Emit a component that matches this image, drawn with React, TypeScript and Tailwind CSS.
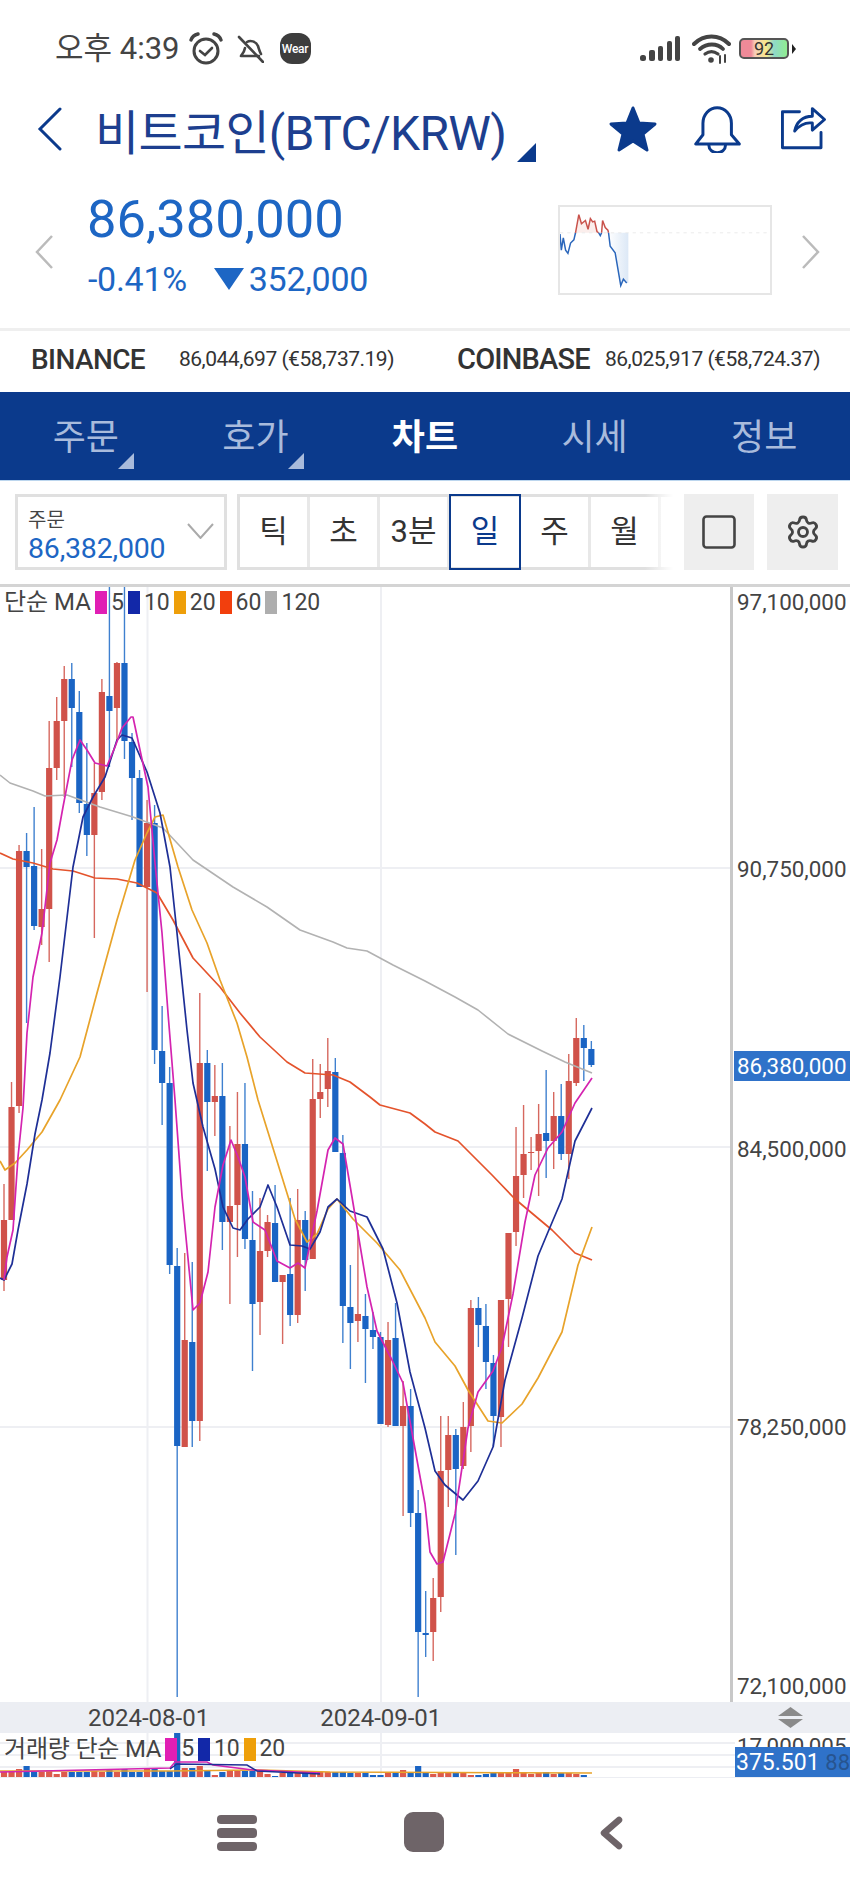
import { Settings } from "lucide-react";

const NAVY = "#0b3a8c";
const BLUE = "#1d66c4";
const RED_BODY = "#d0524a";
const BLUE_BODY = "#1a64c4";

// [rising, bodyTop, bodyBottom, wickTop, wickBottom] in page pixels, one per day
const candles: [number, number, number, number, number][] = [
	[1, 1220, 1280, 1184, 1291], [1, 1107, 1220, 1082, 1220], [1, 851, 1106, 845, 1113], [0, 851, 867, 833, 1023],
	[0, 866, 926, 807, 930], [1, 909, 927, 849, 945], [1, 768, 909, 721, 962], [1, 721, 768, 697, 780],
	[1, 679, 721, 666, 797], [0, 679, 708, 663, 767], [0, 712, 803, 691, 813], [0, 804, 835, 743, 856],
	[1, 793, 835, 763, 938], [1, 692, 792, 679, 800], [0, 696, 711, 586, 767], [1, 663, 708, 662, 740],
	[0, 663, 741, 586, 759], [0, 742, 778, 733, 820], [0, 778, 887, 770, 887], [1, 823, 887, 800, 992],
	[0, 823, 1050, 805, 1064], [0, 1051, 1083, 1006, 1125], [0, 1083, 1265, 1067, 1274], [0, 1266, 1446, 1248, 1697],
	[1, 1340, 1447, 1253, 1447], [0, 1342, 1421, 1262, 1447], [1, 1063, 1421, 993, 1441], [0, 1063, 1102, 1050, 1171],
	[1, 1096, 1102, 1065, 1136], [0, 1096, 1222, 1063, 1250], [1, 1206, 1222, 1126, 1304], [1, 1144, 1205, 1092, 1257],
	[0, 1144, 1239, 1083, 1249], [0, 1240, 1304, 1191, 1371], [1, 1251, 1302, 1198, 1335], [1, 1222, 1251, 1215, 1257],
	[0, 1223, 1282, 1185, 1282], [1, 1275, 1282, 1275, 1344], [0, 1274, 1315, 1198, 1326], [1, 1220, 1315, 1189, 1323],
	[0, 1220, 1260, 1211, 1291], [1, 1099, 1259, 1059, 1259], [1, 1092, 1099, 1064, 1118], [1, 1071, 1089, 1038, 1107],
	[0, 1072, 1152, 1058, 1152], [0, 1153, 1306, 1135, 1343], [0, 1307, 1323, 1265, 1369], [1, 1314, 1321, 1230, 1342],
	[0, 1316, 1329, 1294, 1383], [0, 1330, 1337, 1312, 1349], [0, 1337, 1424, 1332, 1424], [1, 1340, 1425, 1322, 1427],
	[0, 1338, 1426, 1303, 1426], [1, 1406, 1426, 1381, 1516], [0, 1406, 1513, 1389, 1527], [0, 1513, 1632, 1490, 1697],
	[0, 1633, 1635, 1591, 1657], [1, 1598, 1632, 1578, 1661], [1, 1471, 1597, 1416, 1612], [1, 1435, 1470, 1416, 1507],
	[0, 1435, 1469, 1429, 1555], [1, 1427, 1466, 1402, 1469], [1, 1308, 1426, 1300, 1452], [0, 1308, 1325, 1297, 1347],
	[0, 1326, 1362, 1304, 1389], [0, 1363, 1416, 1355, 1447], [1, 1300, 1417, 1300, 1447], [1, 1233, 1299, 1244, 1347],
	[1, 1176, 1232, 1127, 1246], [1, 1154, 1175, 1105, 1198], [1, 1152, 1153, 1137, 1170], [1, 1134, 1151, 1104, 1196],
	[0, 1133, 1141, 1070, 1178], [1, 1116, 1141, 1092, 1169], [0, 1116, 1154, 1084, 1160], [1, 1081, 1154, 1054, 1179],
	[1, 1038, 1083, 1018, 1086], [0, 1038, 1048, 1025, 1081], [0, 1049, 1065, 1041, 1067],
];

const volumes = [
	6, 6, 9, 12, 6, 6, 8, 4, 6, 6, 6, 6, 7, 6, 9, 6, 9, 6, 6, 10, 9, 7, 7, 45, 10, 10, 12, 8, 3, 6, 8, 7, 7, 7, 7, 4, 2, 5, 5, 5, 5, 6,
	6, 6, 6, 6, 5, 5, 5, 3, 3, 5, 5, 8, 6, 12, 6, 4, 5, 5, 5, 5, 3, 3, 4, 5, 5, 5, 9, 6, 4, 5, 6, 4, 5, 5, 4, 3, 1,
];

const ma5 = "4,1280 7,1257 13,1230 18,1157 23,1108 27,1033 33,977 42,933 50,863 57,840 63,807 72,760 80,740 87,750 95,763 107,766 115,747 122,728 131,717 133,717 140,750 148,787 155,863 162,933 168,1013 175,1100 182,1196 193,1310 200,1303 208,1272 215,1207 223,1165 231,1140 238,1157 245,1177 253,1222 265,1230 277,1261 290,1268 298,1263 305,1268 317,1211 328,1150 335,1138 343,1144 353,1203 367,1287 377,1331 392,1360 403,1383 417,1460 425,1504 430,1552 437,1564 443,1562 455,1514 468,1428 478,1392 493,1371 502,1347 513,1294 525,1222 535,1175 548,1148 562,1132 575,1103 592,1078";
const ma10 = "0,1278 4,1280 12,1264 18,1230 27,1184 35,1134 42,1100 50,1053 60,977 73,867 83,817 93,797 105,777 117,740 122,735 132,738 147,772 160,813 170,867 177,933 187,1030 193,1083 203,1127 215,1169 223,1207 233,1228 240,1230 248,1219 260,1207 268,1185 277,1207 290,1245 302,1246 310,1249 320,1232 328,1207 337,1199 350,1211 367,1217 383,1249 397,1303 410,1372 425,1428 435,1471 445,1485 463,1500 478,1481 493,1447 505,1380 522,1318 538,1256 548,1232 562,1199 575,1141 592,1108";
const ma20 = "0,1161 5,1170 15,1163 27,1150 42,1132 60,1100 80,1057 97,993 117,920 135,860 147,833 155,817 163,815 178,867 192,910 207,943 220,980 237,1023 247,1057 258,1100 277,1161 295,1219 307,1242 317,1234 328,1209 337,1199 353,1219 377,1243 400,1270 425,1318 435,1342 455,1366 468,1390 488,1421 502,1423 522,1404 538,1378 562,1332 578,1265 592,1227";
const ma60 = "0,853 13,859 33,863 53,869 73,871 95,878 117,879 137,883 157,893 173,920 193,958 220,987 240,1013 260,1037 287,1062 305,1073 333,1075 350,1082 370,1097 380,1105 410,1113 425,1124 435,1132 458,1141 492,1175 515,1199 552,1230 575,1253 592,1260";
const ma120 = "0,775 10,783 33,791 45,796 67,795 100,807 133,817 163,828 193,860 233,887 267,907 300,930 333,942 347,948 367,951 393,965 425,981 455,997 478,1010 508,1034 542,1051 565,1062 592,1073";

const candleX = (i: number) => 4 + 7.53 * i;

function Corner({ fill, size }: { fill: string; size: number }) {
	return (
		<svg width={size} height={size} viewBox="0 0 10 10">
			<polygon points="10,0 10,10 0,10" fill={fill} />
		</svg>
	);
}

function StatusBar() {
	return (
		<div className="flex h-[95px] items-center pl-[55px] pr-[54px] pt-[2px] text-[#444]">
			<span className="text-[31px] leading-none">오후 4:39</span>
			<svg className="ml-[9px]" width="34" height="34" viewBox="0 0 34 34" fill="none" stroke="#444" strokeWidth="3" strokeLinecap="round">
				<circle cx="17" cy="19" r="12" />
				<path d="M11 19l5 4 7-7" strokeWidth="2.6" />
				<path d="M2 8c1-3 3-5 7-6M32 8c-1-3-3-5-7-6" strokeWidth="3.4" />
			</svg>
			<svg className="ml-[14px]" width="27" height="28" viewBox="0 0 27 28" fill="none" stroke="#444" strokeWidth="2.6" strokeLinecap="round" strokeLinejoin="round">
				<path d="M2 2l24 25" />
				<path d="M4 21h18M4 21c1-2 3-3 4-8M10 7c3-2 9-1 11 4 1 3 1 4 3 8" />
			</svg>
			<div className="ml-[16px] flex h-[31px] w-[31px] items-center justify-center rounded-[12px] bg-[#3d3d3d] text-[12px] font-medium tracking-[-0.3px] text-white">Wear</div>
			<div className="ml-auto flex items-center">
				<svg width="40" height="26" viewBox="0 0 40 26" fill="#444">
					<rect x="0" y="19" width="6" height="6" rx="2.5" />
					<rect x="9" y="14" width="6" height="11" rx="2" />
					<rect x="18" y="10" width="5" height="15" rx="2" />
					<rect x="27" y="5" width="5" height="20" rx="2" />
					<rect x="35" y="0" width="5" height="25" rx="2" />
				</svg>
				<svg className="ml-[12px]" width="39" height="30" viewBox="0 0 39 30" fill="none" stroke="#444" strokeLinecap="round">
					<path d="M2 10c10-10 25-10 35 0" strokeWidth="4" />
					<path d="M8 15c7-6 17-6 23 0" strokeWidth="3.8" />
					<path d="M13 20c4-3 9-3 13 0" strokeWidth="3.2" />
					<circle cx="19" cy="26" r="2.8" fill="#444" stroke="none" />
					<path d="M28 22v7M33 21v7" strokeWidth="2" />
				</svg>
				<div className="ml-[8px] flex h-[21px] w-[50px] items-center justify-center rounded-[5px] border-2 border-[#555] bg-[linear-gradient(90deg,#ef8a98_0%,#ef8a98_22%,#f7cdb8_30%,#f7e88a_55%,#8fd9c8_72%,#90ee90_100%)] text-[18px] leading-none text-[#333]">92</div>
				<svg className="ml-[3px]" width="4" height="10" viewBox="0 0 4 10">
					<polygon points="0,0 4,5 0,10" fill="#222" />
				</svg>
			</div>
		</div>
	);
}

function Header() {
	return (
		<div className="flex h-[95px] items-center pb-[28px] text-[#1d3f8f]">
			<svg className="ml-[37px]" width="25" height="44" viewBox="0 0 25 44" fill="none" stroke={NAVY} strokeWidth="3" strokeLinecap="round">
				<path d="M23 2L3 22l20 20" />
			</svg>
			<span className="ml-[33px] mt-[10px] text-[48px] leading-none tracking-[-0.7px]">비트코인(BTC/KRW)</span>
			<div className="ml-[11px] self-end">
				<Corner fill={NAVY} size={19} />
			</div>
			<svg className="ml-auto" width="50" height="48" viewBox="0 0 50 48">
				<polygon points="25,3 31,18 47,19 35,29 39,45 25,36 11,45 15,29 3,19 19,18" fill={NAVY} stroke={NAVY} strokeWidth="3" strokeLinejoin="round" />
			</svg>
			<svg className="ml-[36px]" width="48" height="48" viewBox="195 250 145 145" fill="none" stroke={NAVY} strokeWidth="9" strokeLinecap="round" strokeLinejoin="round">
				<path d="M200 368l22-28v-35a43 47 0 0 1 86 0v35l24 28z" />
				<path d="M240 372a25 22 0 0 0 50 0" />
			</svg>
			<svg className="ml-[38px] mr-[23px]" width="47" height="45" viewBox="450 250 145 140" fill="none" stroke={NAVY} strokeWidth="9" strokeLinecap="round" strokeLinejoin="round">
				<path d="M510 268h-53v112h120v-48" />
				<path d="M495 328c5-28 25-46 55-46v-24l38 34-38 33v-22c-22-3-40 7-55 25z" />
			</svg>
		</div>
	);
}

function Sparkline() {
	return (
		<div className="h-[90px] w-[214px] border-2 border-[#e6e6e6]">
			<svg className="h-full w-full" viewBox="28 16 636 267" preserveAspectRatio="none" fill="none">
				<defs>
					<linearGradient id="sparkFill" x1="0" y1="0" x2="1" y2="0">
						<stop offset="0" stopColor="#ffffff" />
						<stop offset="1" stopColor="#dce8f6" />
					</linearGradient>
				</defs>
				<polygon points="173,96 235,96 235,252 230,252 220,240 212,260 195,158 180,138" fill="url(#sparkFill)" />
				<polygon points="77,96 85,40 93,68 105,58 113,85 120,52 127,62 133,60 140,92 146,96" fill="#fbeeec" />
				<path d="M28 96H664" stroke="#ececec" strokeWidth="3" strokeDasharray="10 12" />
				<polyline points="28,100 32,150 38,112 45,150 52,160 60,128 70,118 75,96" stroke="#2a66bb" strokeWidth="4.5" />
				<polyline points="75,96 85,40 93,68 105,58 113,85 120,52 127,62 133,60 140,92 145,96" stroke="#c9524b" strokeWidth="4.5" />
				<polyline points="145,96 150,105 154,96" stroke="#2a66bb" strokeWidth="4.5" />
				<polyline points="154,96 157,58 165,80 173,88 175,96" stroke="#c9524b" strokeWidth="4.5" />
				<polyline points="175,96 180,138 195,158 212,260 220,240 230,252" stroke="#2a66bb" strokeWidth="4.5" />
			</svg>
		</div>
	);
}

function PriceRow() {
	return (
		<div className="flex h-[138px] items-start" style={{ color: BLUE }}>
			<svg className="ml-[35px] mt-[45px]" width="18" height="34" viewBox="0 0 18 34" fill="none" stroke="#bbb" strokeWidth="2.5">
				<path d="M17 1L2 17l15 16" />
			</svg>
			<div className="ml-[34px] flex flex-col">
				<span className="text-[52.5px] leading-[58px]">86,380,000</span>
				<div className="mt-[11px] flex items-center pl-px text-[34px] leading-[40px] tracking-[-0.3px]">
					<span>-0.41%</span>
					<svg className="ml-[27px]" width="30" height="22" viewBox="0 0 30 22">
						<polygon points="0,0 30,0 15,22" fill={BLUE} />
					</svg>
					<span className="ml-[5px]">352,000</span>
				</div>
			</div>
			<div className="ml-auto mt-[15px]">
				<Sparkline />
			</div>
			<svg className="ml-[30px] mr-[30px] mt-[45px]" width="18" height="34" viewBox="0 0 18 34" fill="none" stroke="#bbb" strokeWidth="2.5">
				<path d="M1 1l15 16L1 33" />
			</svg>
		</div>
	);
}

function ExchangeRow() {
	return (
		<div className="flex h-[61px] items-center pb-[3px] text-[#333]">
			<span className="ml-[31px] w-[148px] text-[28px] font-medium tracking-[-0.6px]">BINANCE</span>
			<span className="w-[278px] text-[21px] tracking-[-0.5px]">86,044,697 (€58,737.19)</span>
			<span className="w-[148px] text-[29px] font-medium tracking-[-0.8px]">COINBASE</span>
			<span className="text-[21px] tracking-[-0.5px]">86,025,917 (€58,724.37)</span>
		</div>
	);
}

function TabBar() {
	const tabs = [
		{ label: "주문", corner: true },
		{ label: "호가", corner: true },
		{ label: "차트", active: true },
		{ label: "시세" },
		{ label: "정보" },
	];
	return (
		<div className="flex h-[89px] items-center justify-between border-b border-[#bcd6ee] bg-[#0b3a8c] px-[1px]">
			{tabs.map((t) => (
				<div key={t.label} className="relative flex h-full w-[170px] items-center justify-center pt-[3px]">
					<span className={t.active ? "text-[36px] font-bold text-white" : "text-[36px] text-[#a9bbdc]"}>{t.label}</span>
					{t.corner && (
						<div className="absolute bottom-[11px] left-[117px]">
							<Corner fill="#a9bbdc" size={16} />
						</div>
					)}
				</div>
			))}
		</div>
	);
}

function ControlRow() {
	const periods = ["틱", "초", "3분", "일", "주", "월"];
	return (
		<div className="flex h-[103px] items-start pt-[13px]">
			<div className="ml-[15px] flex h-[76px] w-[212px] items-center border-[3px] border-[#e0e0e0] pl-[10px]">
				<div className="flex flex-col pt-[8px]">
					<span className="text-[20px] leading-[26px] text-[#444]">주문</span>
					<span className="text-[28.5px] leading-[32px] tracking-[-0.2px]" style={{ color: BLUE }}>86,382,000</span>
				</div>
				<svg className="ml-[22px] mb-[3px]" width="27" height="16" viewBox="0 0 27 16" fill="none" stroke="#aaa" strokeWidth="2">
					<path d="M1 1l12.5 14L26 1" />
				</svg>
			</div>
			<div className="relative ml-[10px] flex h-[76px] w-[436px] border-y-[3px] border-l-[3px] border-[#e0e0e0]">
				{periods.map((p) =>
					p === "일" ? (
						<div key={p} className="relative z-10 -my-[3px] -ml-px flex w-[72px] items-center justify-center border-2 border-[#0b3a8c] text-[31px] text-[#0b3a8c]">
							{p}
						</div>
					) : (
						<div key={p} className="flex w-[70px] items-center justify-center border-r-[3px] border-[#e8e8e8] text-[31px] text-[#333]">
							{p}
						</div>
					),
				)}
				<div className="absolute -top-[3px] -bottom-[3px] right-0 w-[28px] bg-gradient-to-r from-white/0 to-white" />
			</div>
			<div className="ml-[11px] flex h-[76px] w-[70px] items-center justify-center bg-[#eeeeee]">
				<svg width="34" height="34" viewBox="0 0 34 34" fill="none" stroke="#444" strokeWidth="2.6">
					<rect x="1.5" y="1.5" width="31" height="31" rx="3" />
				</svg>
			</div>
			<div className="ml-[13px] flex h-[76px] w-[71px] items-center justify-center bg-[#eeeeee]">
				<Settings size={36} strokeWidth={1.9} color="#444" />
			</div>
		</div>
	);
}

function LegendItem({ color, label }: { color: string; label: string }) {
	return (
		<>
			<span className="ml-[4px] mr-[4px] h-[23px] w-[12px]" style={{ backgroundColor: color }} />
			<span className="text-[23px]">{label}</span>
		</>
	);
}

function PriceChart() {
	return (
		<div className="relative flex h-[1118px] border-t-[3px] border-[#d4d4d4]">
			<div className="relative w-[730px] shrink-0">
				<svg className="block h-[1115px] w-[730px]" viewBox="0 587 730 1115" fill="none" strokeLinejoin="round">
					<path d="M0 868H730M0 1147H730M0 1427H730M147.5 587V1702M381 587V1702" stroke="#eeeff3" strokeWidth="2" />
					{candles.map(([up, , , wTop, wBot], i) => (
						<line key={`w${i}`} x1={candleX(i)} x2={candleX(i)} y1={wTop} y2={wBot} stroke={up ? "#d6685f" : "#3f80cf"} strokeWidth="1.4" />
					))}
					{candles.map(([up, bTop, bBot], i) => (
						<rect key={`b${i}`} x={candleX(i) - 3.1} y={bTop} width="6.2" height={bBot - bTop} fill={up ? RED_BODY : BLUE_BODY} />
					))}
					<polyline points={ma120} stroke="#b2b2b2" strokeWidth="1.6" />
					<polyline points={ma60} stroke="#e4532c" strokeWidth="1.7" />
					<polyline points={ma20} stroke="#e8a32a" strokeWidth="1.7" />
					<polyline points={ma10} stroke="#1e2f96" strokeWidth="1.7" />
					<polyline points={ma5} stroke="#d424b0" strokeWidth="1.7" />
				</svg>
				<div className="absolute left-[4px] top-[4px] flex items-center text-[24px] leading-[23px] text-[#444]">
					<span>단순 MA</span>
					<LegendItem color="#e01fb4" label="5" />
					<LegendItem color="#1228a8" label="10" />
					<LegendItem color="#ee9f0a" label="20" />
					<LegendItem color="#f23f0d" label="60" />
					<LegendItem color="#aeaeae" label="120" />
				</div>
			</div>
			<div className="flex-1 border-l-[3px] border-[#c8c8c8] text-[22.4px] leading-[30px] text-[#444]">
				<div className="ml-[4px] h-[30px]">97,100,000</div>
				<div className="ml-[4px] mt-[237px] h-[30px]">90,750,000</div>
				<div className="ml-px mt-[167px] h-[30px] bg-[#2f72c9] pl-[3px] text-white">86,380,000</div>
				<div className="ml-[4px] mt-[53px] h-[30px]">84,500,000</div>
				<div className="ml-[4px] mt-[248px] h-[30px]">78,250,000</div>
				<div className="ml-[4px] mt-[229px] h-[30px]">72,100,000</div>
			</div>
		</div>
	);
}

function DateStrip() {
	return (
		<div className="flex h-[31px] items-center bg-[#eceef3] text-[24px] text-[#444]">
			<span className="ml-[88px]">2024-08-01</span>
			<span className="ml-[111px]">2024-09-01</span>
			<svg className="ml-auto mr-[47px]" width="25" height="21" viewBox="0 0 25 21" fill="#8a8a8a">
				<polygon points="12.5,0 25,9 0,9" />
				<polygon points="0,12 25,12 12.5,21" />
			</svg>
		</div>
	);
}

function VolumeChart() {
	return (
		<div className="flex h-[45px] border-b border-[#eceef3]">
			<div className="relative w-[735px] shrink-0 overflow-hidden">
				<svg className="block h-[45px] w-[735px]" viewBox="0 1733 735 45" fill="none">
					<path d="M0 1743H735M0 1755H735M0 1767H735M147.5 1733V1778M381 1733V1778" stroke="#eeeff3" strokeWidth="2" />
					{volumes.map((h, i) => (
						<rect key={i} x={candleX(i) - 3.1} y={1778 - h} width="6.2" height={h} fill={candles[i][0] ? "#dd5a4c" : BLUE_BODY} />
					))}
					<polyline points="0,1771 170,1771 260,1770 330,1772 592,1773" stroke="#e8a32a" strokeWidth="1.5" />
					<polyline points="0,1772 170,1768 175,1762 207,1762 213,1765 253,1770 320,1773" stroke="#d424b0" strokeWidth="1.5" />
					<polyline points="170,1769 177,1764 247,1765 257,1771 320,1774" stroke="#1e2f96" strokeWidth="1.5" />
				</svg>
				<div className="absolute left-[4px] top-[4px] flex items-center text-[24px] leading-[24px] tracking-[-0.2px] text-[#444]">
					<span>거래량 단순 MA</span>
					<LegendItem color="#e01fb4" label="5" />
					<LegendItem color="#1228a8" label="10" />
					<LegendItem color="#ee9f0a" label="20" />
				</div>
			</div>
			<div className="relative flex-1 overflow-hidden">
				<div className="ml-[2px] h-[14px] overflow-hidden text-[22.4px] leading-[26px] text-[#444]">17,000,005</div>
				<div className="relative h-[31px] bg-[#2f72c9] pl-[1px] text-[23px] leading-[31px] text-white">
					375.501
					<span className="absolute right-0 top-0 text-[22px] text-[#27548f]">88</span>
				</div>
			</div>
		</div>
	);
}

function BottomNav() {
	return (
		<div className="flex flex-1 items-start pt-[34px]">
			<div className="ml-[217px] flex w-[40px] flex-col gap-[4px] pt-[3px]">
				<div className="h-[9px] rounded-[4px] bg-[#6e6468]" />
				<div className="h-[10px] rounded-[4px] bg-[#6e6468]" />
				<div className="h-[9px] rounded-[4px] bg-[#6e6468]" />
			</div>
			<div className="ml-[147px] h-[40px] w-[40px] rounded-[9px] bg-[#6e6468]" />
			<svg className="ml-[155px] mt-[4px]" width="24" height="34" viewBox="0 0 24 34" fill="none" stroke="#6e6468" strokeWidth="6.5" strokeLinecap="round" strokeLinejoin="round">
				<path d="M20 4L5 17l15 13" />
			</svg>
		</div>
	);
}

export default function App() {
	return (
		<div className="flex h-[1889px] w-[850px] flex-col overflow-hidden bg-white font-['Roboto','Noto_Sans_CJK_KR',sans-serif]">
			<StatusBar />
			<Header />
			<PriceRow />
			<div className="h-[3px] bg-[#efefef]" />
			<ExchangeRow />
			<TabBar />
			<ControlRow />
			<PriceChart />
			<DateStrip />
			<VolumeChart />
			<BottomNav />
		</div>
	);
}
